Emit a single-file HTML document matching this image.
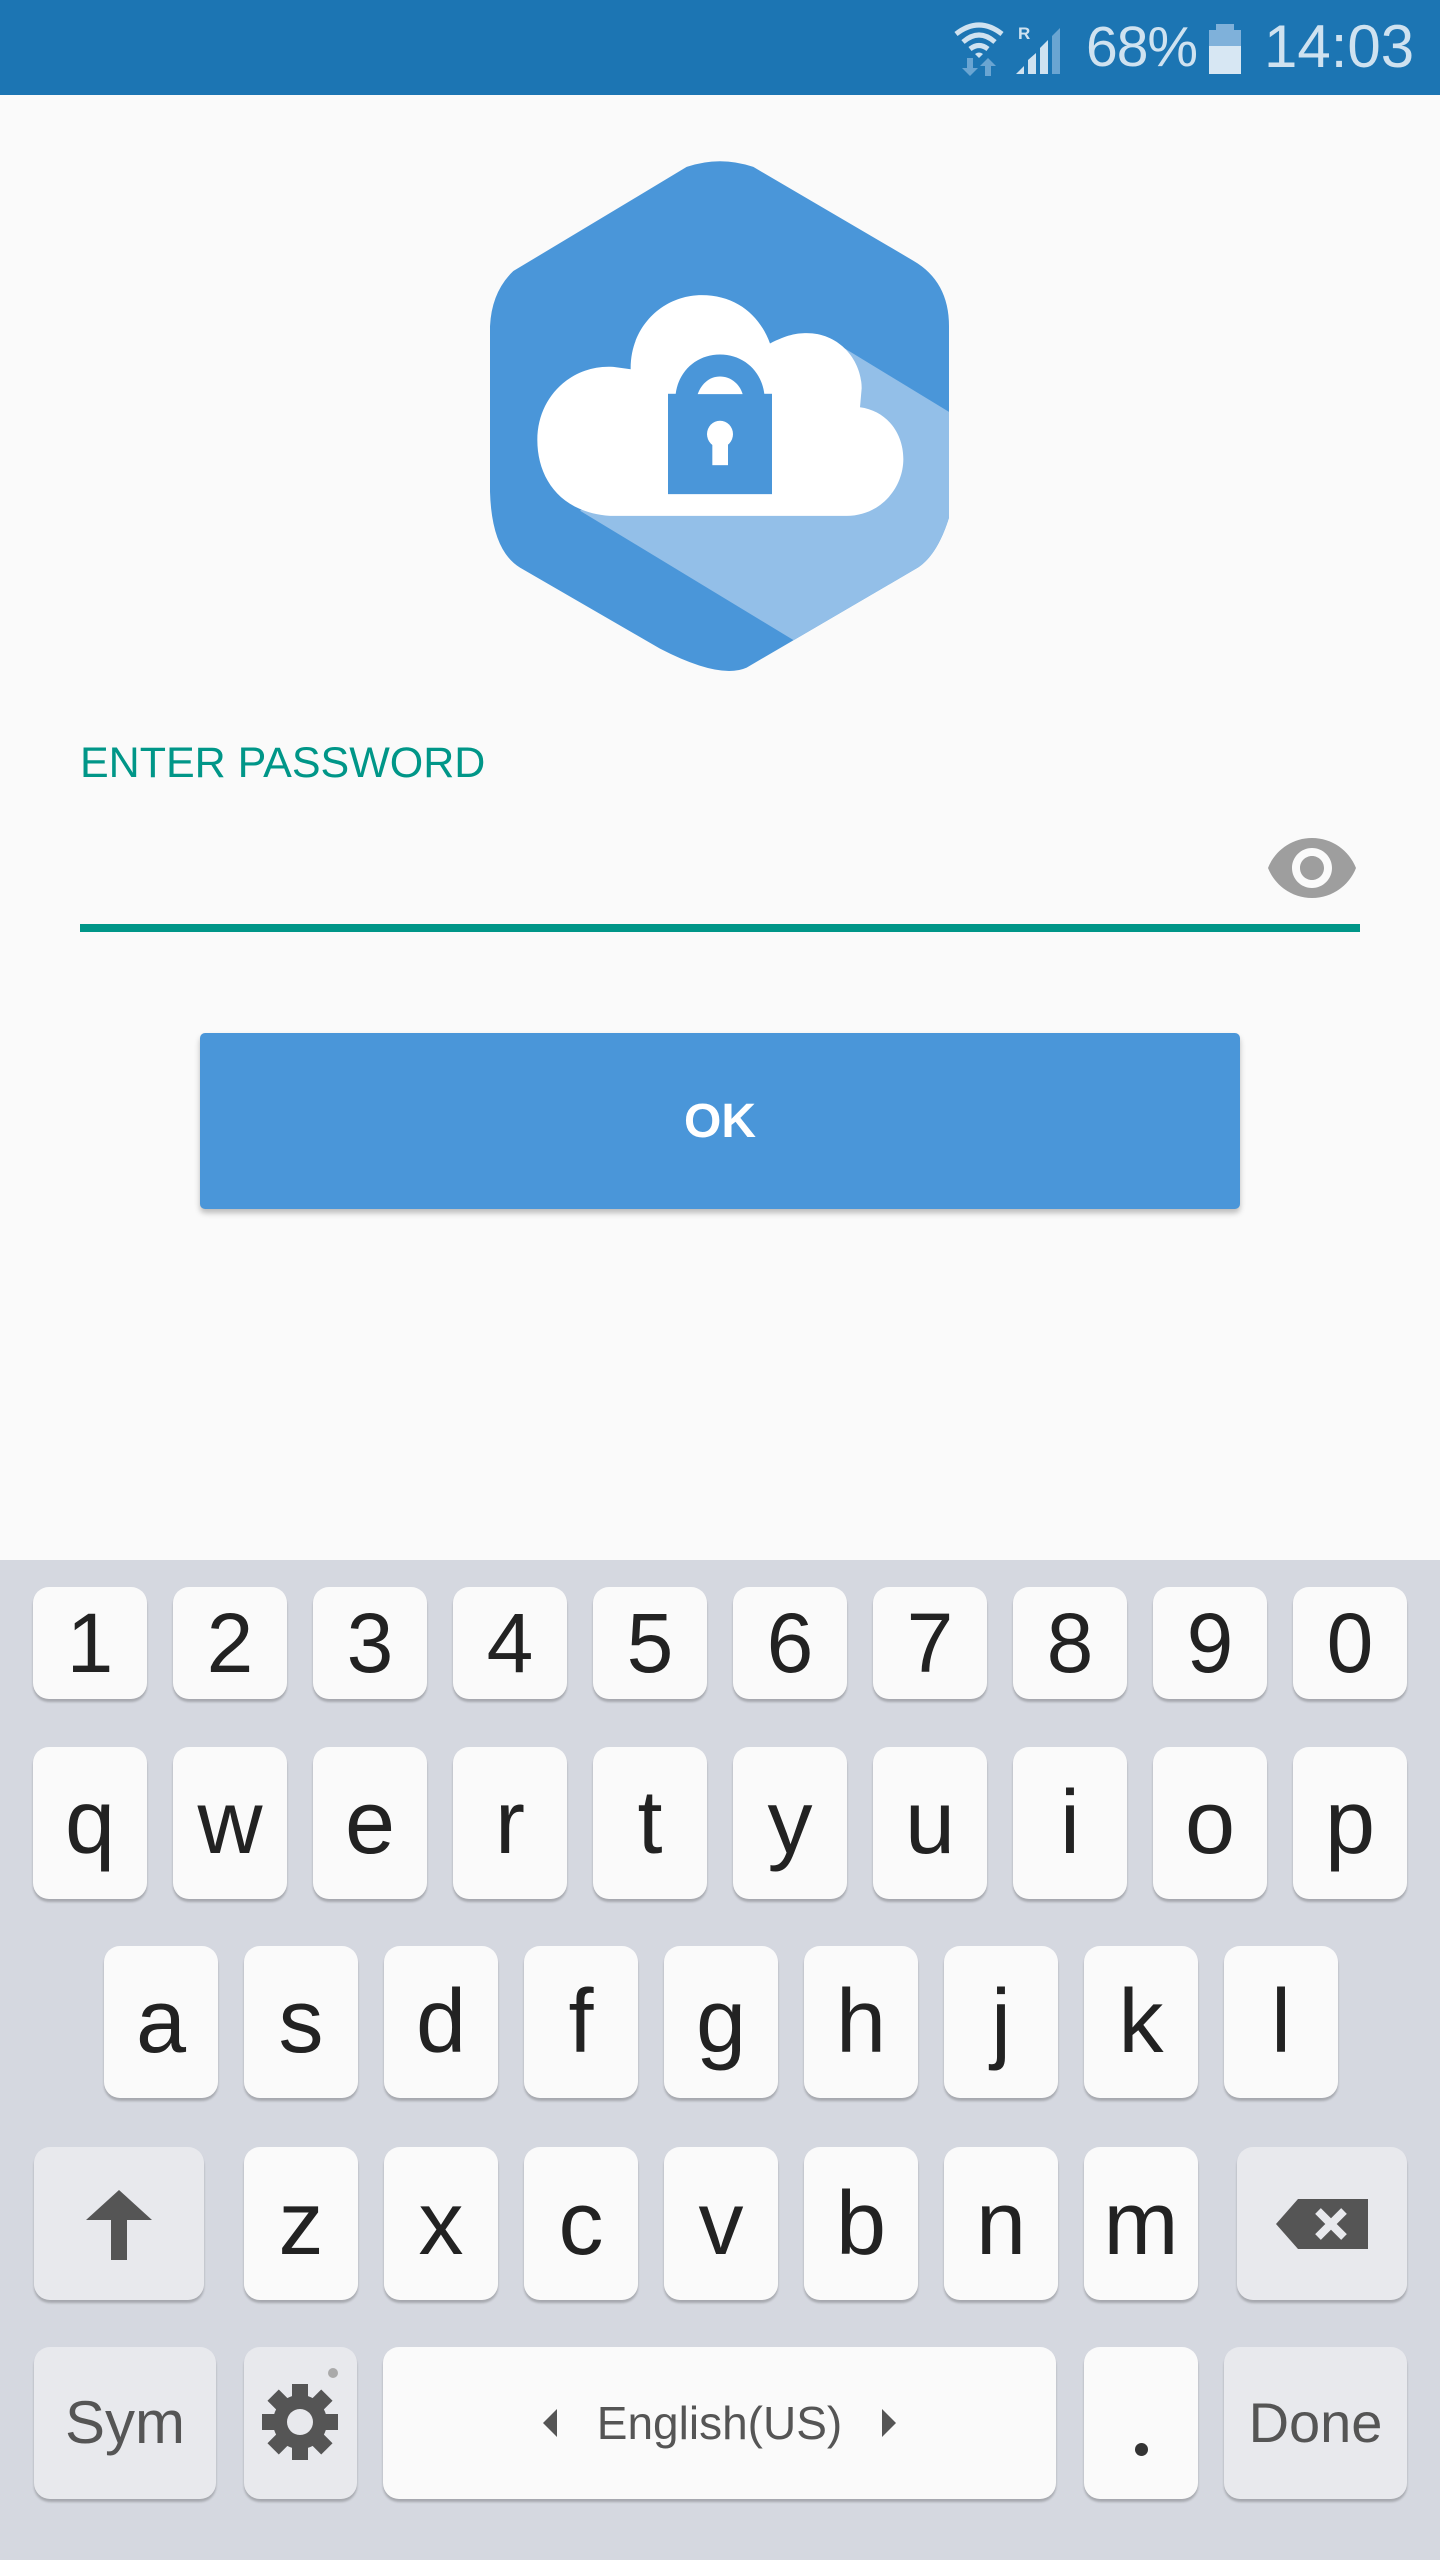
<!DOCTYPE html>
<html><head><meta charset="utf-8"><style>
*{margin:0;padding:0;box-sizing:border-box}
body{width:1440px;height:2560px;background:#fafafa;position:relative;overflow:hidden;font-family:"Liberation Sans",Roboto,sans-serif}
.a{position:absolute}
.k{position:absolute;background:#fafafa;border-radius:16px;box-shadow:0 3px 2px rgba(0,0,0,.22);display:flex;align-items:center;justify-content:center;color:#222;font-size:84px;line-height:1}
.g{background:#e8e9ed;color:#555}
</style></head><body>
<div class="a" style="left:0;top:0;width:1440px;height:95px;background:#1c75b3"></div>
<svg class="a" style="left:950px;top:18px" width="120" height="60" viewBox="0 0 120 60">
<path d="M6 16 Q29 -2 52 16" stroke="#cfe2f0" stroke-width="5" fill="none"/>
<path d="M13 24 Q29 10 45 24" stroke="#cfe2f0" stroke-width="5" fill="none"/>
<path d="M20 31 Q29 24 38 31" stroke="#cfe2f0" stroke-width="5" fill="none"/>
<path d="M25 36 L29 40 L33 36 Q29 33 25 36Z" fill="#cfe2f0"/>
<path d="M17 40 v10 h-5 l8 8 l8-8 h-5 v-10z" fill="#6aa5d2"/>
<path d="M35 58 v-10 h-5 l8-8 l8 8 h-5 v10z" fill="#6aa5d2"/>
<text x="68" y="21" font-size="17" font-weight="bold" fill="#cfe2f0" font-family="Liberation Sans">R</text>
<path d="M66 56 L74 48 V56Z M78 56 V42 L86 35 V56Z M90 56 V30 L98 22 V56Z" fill="#cfe2f0"/>
<path d="M102 56 V18 L110 10 V56Z" fill="#6aa5d2"/>
</svg>
<div class="a" style="left:1086px;top:19px;font-size:57px;letter-spacing:-1px;color:#cfe2f0;line-height:1">68%</div>
<div class="a" style="left:1216px;top:24px;width:18px;height:6px;background:#7fb1da"></div>
<div class="a" style="left:1209px;top:30px;width:32px;height:16px;background:#7fb1da"></div>
<div class="a" style="left:1209px;top:46px;width:32px;height:28px;background:#d7e7f3"></div>
<div class="a" style="left:1264px;top:17px;font-size:60px;color:#cfe2f0;line-height:1">14:03</div>

<svg class="a" style="left:460px;top:140px" width="520" height="540" viewBox="0 0 1560 1566" preserveAspectRatio="none">
<defs><clipPath id="h"><path d="M680,78 Q780,45 880,78 L1360,350 Q1467,410 1467,540 L1467,1095 Q1430,1210 1365,1245 L860,1530 Q780,1565 600,1475 L180,1240 Q95,1190 90,1020 L90,540 Q95,440 160,380 Z"/></clipPath></defs>
<path d="M680,78 Q780,45 880,78 L1360,350 Q1467,410 1467,540 L1467,1095 Q1430,1210 1365,1245 L860,1530 Q780,1565 600,1475 L180,1240 Q95,1190 90,1020 L90,540 Q95,440 160,380 Z" fill="#4a96d9"/>
<path clip-path="url(#h)" d="M1130,590 L1500,808 L1500,1400 L1000,1450 L360,1075 Z" fill="#93bfe8"/>
<path d="M450,1090 C300,1080 232,980 232,870 C232,740 340,650 460,658 L512,665 C510,540 610,450 725,450 C830,450 900,510 930,590 C980,565 1010,560 1040,560 C1140,560 1205,640 1205,720 L1200,775 C1280,785 1330,850 1330,925 C1330,1010 1260,1090 1160,1090 Z" fill="#fff"/>
<rect x="624" y="736" width="312" height="291" fill="#4a96d9"/>
<path d="M647,737 C655,670 710,622 780,622 C850,622 905,670 913,737 Z" fill="#4a96d9"/>
<path d="M713,737 C725,705 750,686 780,686 C810,686 838,705 848,737 Z" fill="#fff"/>
<circle cx="780" cy="853" r="39" fill="#fff"/>
<rect x="757" y="870" width="47" height="73" fill="#fff"/>
</svg>

<div class="a" style="left:80px;top:740px;font-size:43px;color:#009688;line-height:1.1">ENTER PASSWORD</div>
<svg class="a" style="left:1264px;top:820px" width="96" height="96" viewBox="0 0 24 24"><path fill="#9e9e9e" d="M12 4.5C7 4.5 2.73 7.61 1 12c1.730 4.39 6 7.5 11 7.5s9.27-3.11 11-7.5c-1.73-4.39-6-7.5-11-7.5zM12 17c-2.76 0-5-2.24-5-5s2.24-5 5-5 5 2.24 5 5-2.24 5-5 5zm0-8c-1.66 0-3 1.34-3 3s1.34 3 3 3 3-1.34 3-3-1.34-3-3-3z"/></svg>
<div class="a" style="left:80px;top:924px;width:1280px;height:8px;background:#009688"></div>
<div class="a" style="left:200px;top:1033px;width:1040px;height:176px;background:#4a96d9;border-radius:5px;box-shadow:0 4px 6px rgba(0,0,0,.25);color:#fff;font-size:48px;font-weight:bold;display:flex;align-items:center;justify-content:center">OK</div>

<div class="a" style="left:0;top:1560px;width:1440px;height:1000px;background:#d5d8e0"></div>
<div class="k" style="left:33px;top:1587px;width:114px;height:112px">1</div>
<div class="k" style="left:173px;top:1587px;width:114px;height:112px">2</div>
<div class="k" style="left:313px;top:1587px;width:114px;height:112px">3</div>
<div class="k" style="left:453px;top:1587px;width:114px;height:112px">4</div>
<div class="k" style="left:593px;top:1587px;width:114px;height:112px">5</div>
<div class="k" style="left:733px;top:1587px;width:114px;height:112px">6</div>
<div class="k" style="left:873px;top:1587px;width:114px;height:112px">7</div>
<div class="k" style="left:1013px;top:1587px;width:114px;height:112px">8</div>
<div class="k" style="left:1153px;top:1587px;width:114px;height:112px">9</div>
<div class="k" style="left:1293px;top:1587px;width:114px;height:112px">0</div>

<div class="k" style="left:33px;top:1747px;width:114px;height:152px;font-size:90px">q</div>
<div class="k" style="left:173px;top:1747px;width:114px;height:152px;font-size:90px">w</div>
<div class="k" style="left:313px;top:1747px;width:114px;height:152px;font-size:90px">e</div>
<div class="k" style="left:453px;top:1747px;width:114px;height:152px;font-size:90px">r</div>
<div class="k" style="left:593px;top:1747px;width:114px;height:152px;font-size:90px">t</div>
<div class="k" style="left:733px;top:1747px;width:114px;height:152px;font-size:90px">y</div>
<div class="k" style="left:873px;top:1747px;width:114px;height:152px;font-size:90px">u</div>
<div class="k" style="left:1013px;top:1747px;width:114px;height:152px;font-size:90px">i</div>
<div class="k" style="left:1153px;top:1747px;width:114px;height:152px;font-size:90px">o</div>
<div class="k" style="left:1293px;top:1747px;width:114px;height:152px;font-size:90px">p</div>

<div class="k" style="left:104px;top:1946px;width:114px;height:152px;font-size:90px">a</div>
<div class="k" style="left:244px;top:1946px;width:114px;height:152px;font-size:90px">s</div>
<div class="k" style="left:384px;top:1946px;width:114px;height:152px;font-size:90px">d</div>
<div class="k" style="left:524px;top:1946px;width:114px;height:152px;font-size:90px">f</div>
<div class="k" style="left:664px;top:1946px;width:114px;height:152px;font-size:90px">g</div>
<div class="k" style="left:804px;top:1946px;width:114px;height:152px;font-size:90px">h</div>
<div class="k" style="left:944px;top:1946px;width:114px;height:152px;font-size:90px">j</div>
<div class="k" style="left:1084px;top:1946px;width:114px;height:152px;font-size:90px">k</div>
<div class="k" style="left:1224px;top:1946px;width:114px;height:152px;font-size:90px">l</div>

<div class="k g" style="left:34px;top:2147px;width:170px;height:153px"><svg width="70" height="72" viewBox="0 0 70 72"><path d="M35 2 L68 32 H43 V72 H27 V32 H2 Z" fill="#555"/></svg></div>
<div class="k" style="left:244px;top:2147px;width:114px;height:153px;font-size:90px">z</div>
<div class="k" style="left:384px;top:2147px;width:114px;height:153px;font-size:90px">x</div>
<div class="k" style="left:524px;top:2147px;width:114px;height:153px;font-size:90px">c</div>
<div class="k" style="left:664px;top:2147px;width:114px;height:153px;font-size:90px">v</div>
<div class="k" style="left:804px;top:2147px;width:114px;height:153px;font-size:90px">b</div>
<div class="k" style="left:944px;top:2147px;width:114px;height:153px;font-size:90px">n</div>
<div class="k" style="left:1084px;top:2147px;width:114px;height:153px;font-size:90px">m</div>
<div class="k g" style="left:1237px;top:2147px;width:170px;height:153px"><svg width="92" height="50" viewBox="0 0 92 50"><path d="M22 0 H92 V50 H22 L0 25 Z" fill="#555"/><path d="M42 12 L68 38 M68 12 L42 38" stroke="#e8e9ed" stroke-width="8"/></svg></div>

<div class="k g" style="left:34px;top:2347px;width:182px;height:152px;font-size:60px">Sym</div>
<div class="k g" style="left:244px;top:2347px;width:113px;height:152px"><svg width="113" height="152" viewBox="0 0 113 152"><circle cx="89" cy="26" r="5" fill="#aaa"/><g transform="translate(56,75)" fill="#555"><circle r="27"/><rect x="-8" y="-38" width="16" height="76"/><rect x="-8" y="-38" width="16" height="76" transform="rotate(45)"/><rect x="-8" y="-38" width="16" height="76" transform="rotate(90)"/><rect x="-8" y="-38" width="16" height="76" transform="rotate(135)"/><circle r="13" fill="#e8e9ed"/></g></svg></div>
<div class="k" style="left:383px;top:2347px;width:673px;height:152px;font-size:46px;color:#555">
<svg width="18" height="28" viewBox="0 0 18 28" style="margin-right:38px"><path d="M16 0 V28 L2 14Z" fill="#555"/></svg>English(US)<svg width="18" height="28" viewBox="0 0 18 28" style="margin-left:38px"><path d="M2 0 V28 L16 14Z" fill="#555"/></svg></div>
<div class="k" style="left:1084px;top:2347px;width:114px;height:152px"><div style="width:13px;height:13px;border-radius:50%;background:#333;margin-top:52px"></div></div>
<div class="k g" style="left:1224px;top:2347px;width:183px;height:152px;font-size:56px">Done</div>
</body></html>
